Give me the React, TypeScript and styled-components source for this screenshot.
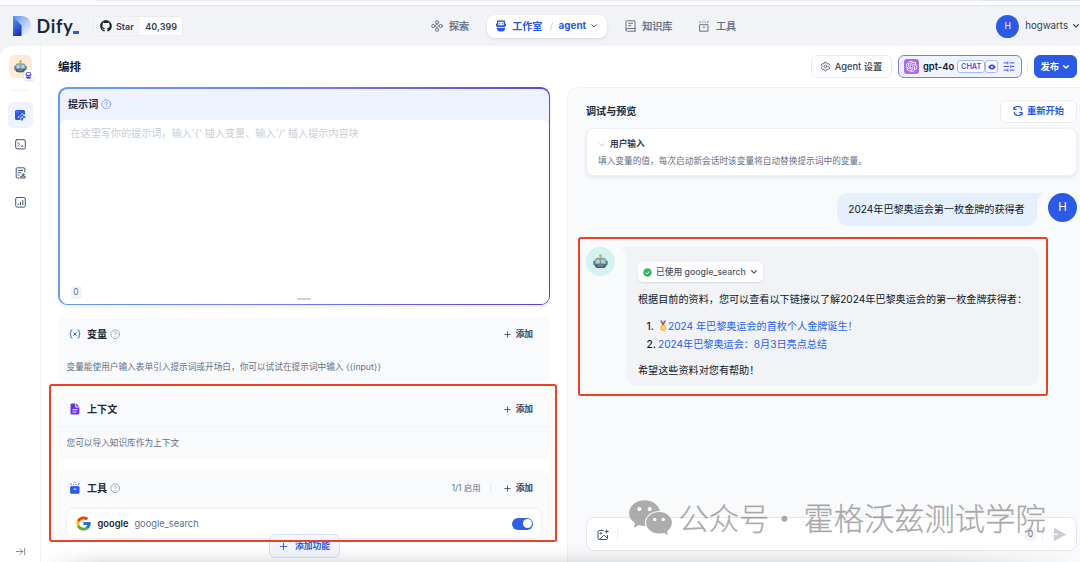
import React from "react";
import styled, { createGlobalStyle } from "styled-components";
import { Plus, Settings, CircleHelp, ArrowRightToLine } from "lucide-react";
import { FaGithub } from "react-icons/fa";
import { FcGoogle } from "react-icons/fc";
import { SiOpenai } from "react-icons/si";
import { AiFillWechat } from "react-icons/ai";
import { RiSendPlane2Fill } from "react-icons/ri";

const Global = createGlobalStyle`
  * { box-sizing: border-box; }
  html, body { margin: 0; padding: 0; overflow: hidden; }
  body { font-family: Inter, "Noto Sans CJK SC", sans-serif; color: #1d2939; font-size: 10px; line-height: 1; }
  svg { display: block; flex: none; }
`;

const Page = styled.div`
  position: relative;
  width: 1080px;
  height: 562px;
  overflow: hidden;
  display: flex;
  flex-direction: column;
  background: #f2f3f7;
`;
const BrowserEdge = styled.div`
  height: 6px;
  flex: none;
  display: flex;
  align-items: flex-start;
  background: #fff;
  border-bottom: 1px solid #dfe1e6;
  padding-left: 96px;
`;
const EdgeTab = styled.div<{ $w: number; $c: string }>`
  width: ${(p) => p.$w}px;
  height: 1px;
  background: ${(p) => p.$c};
`;
const Header = styled.header`
  height: 40px;
  flex: none;
  display: grid;
  grid-template-columns: 431px 1fr auto;
  align-items: center;
`;
const Brand = styled.div`
  display: flex;
  align-items: center;
  padding-left: 12px;
`;
const Logo = styled.div`
  width: 68px;
  height: 24px;
  display: flex;
  align-items: center;
`;
const Wordmark = styled.span`
  margin-left: 4.5px;
  font-family: Lato, sans-serif;
  font-weight: 700;
  font-size: 18px;
  line-height: 24px;
  letter-spacing: 0.7px;
  color: #1d2939;
`;
const Cursor = styled.i`
  width: 6px;
  height: 3px;
  margin: 12px 0 0 -0.2px;
  flex: none;
  background: #2b5be6;
`;
const StarBadge = styled.div`
  margin-left: 13px;
  display: flex;
  height: 20px;
  border: 1px solid #ebecf0;
  border-radius: 4px;
  overflow: hidden;
  font-size: 9px;
  font-weight: 600;
  color: #344054;
`;
const StarPart = styled.div<{ $white?: boolean }>`
  display: flex;
  align-items: center;
  gap: 4px;
  padding: 0 ${(p) => (p.$white ? 5.5 : 6)}px;
  background: ${(p) => (p.$white ? "#fff" : "#f4f5f8")};
`;
const Nav = styled.nav`
  display: flex;
  align-items: center;
  height: 40px;
`;
const NavItem = styled.div<{ $ml?: number }>`
  display: flex;
  align-items: center;
  gap: 6px;
  margin-left: ${(p) => p.$ml ?? 0}px;
  color: #667085;
  font-size: 10.1px;
  font-weight: 500;
  -webkit-text-stroke: 0.2px currentColor;
`;
const NavPill = styled.div`
  display: flex;
  align-items: center;
  margin-left: 18px;
  width: 120px;
  height: 23px;
  padding: 0 9px 0 8px;
  border-radius: 8px;
  background: #fff;
  box-shadow: 0 1px 3px rgba(16, 24, 40, 0.12);
  color: #2959e6;
  font-size: 10.1px;
  font-weight: 700;
`;
const PillText = styled.span`
  margin: 0 auto 0 5px;
`;
const PillApp = styled.span`
  margin-right: 4px;
  font-size: 9.9px;
`;
const Slash = styled.span`
  margin: 0 5.5px 0 0;
  color: #c9ced8;
  font-weight: 400;
`;
const Account = styled.div`
  display: flex;
  align-items: center;
  gap: 6px;
  color: #344054;
  font-size: 9.7px;
  svg { margin-left: -2px; }
`;
const Avatar = styled.div<{ $s: number; $f: number }>`
  flex: none;
  width: ${(p) => p.$s}px;
  height: ${(p) => p.$s}px;
  border-radius: 50%;
  display: flex;
  align-items: center;
  justify-content: center;
  background: #2b5be6;
  color: #fff;
  font-size: ${(p) => p.$f}px;
`;
const Body = styled.div`
  flex: 1;
  display: flex;
  background: #fff;
  border-top-left-radius: 12px;
  overflow: hidden;
`;
const Sidebar = styled.aside`
  width: 41px;
  flex: none;
  border-right: 1px solid #f0f1f4;
  display: flex;
  flex-direction: column;
  align-items: center;
  padding: 9px 0 5px;
`;
const AppIcon = styled.div`
  position: relative;
  width: 23px;
  height: 23px;
  border-radius: 6px;
  background: #fdead7;
  display: flex;
  align-items: center;
  justify-content: center;
`;
const AppKind = styled.div`
  position: absolute;
  right: -2px;
  bottom: -2px;
  width: 10px;
  height: 10px;
  border-radius: 3px;
  background: #fff;
  box-shadow: 0 1px 2px rgba(16, 24, 40, 0.15);
  display: flex;
  align-items: center;
  justify-content: center;
`;
const SideRule = styled.div`
  width: 18px;
  height: 1px;
  margin: 12px 0 11px;
  background: #f0f1f3;
`;
const SideItem = styled.div<{ $on?: boolean }>`
  width: 25px;
  height: 26px;
  margin-bottom: 3px;
  border-radius: 5px;
  display: flex;
  align-items: center;
  justify-content: center;
  color: #475467;
  background: ${(p) => (p.$on ? "#eff3ff" : "transparent")};
`;
const SideFoot = styled.div`
  margin-top: auto;
  color: #7b8497;
`;
const Main = styled.main`
  flex: 1;
  display: flex;
  flex-direction: column;
  min-width: 0;
`;
const TitleRow = styled.div`
  height: 41px;
  flex: none;
  display: flex;
  align-items: center;
  padding: 0 3px 0 17px;
`;
const Title = styled.h1`
  margin: 0 auto 0 0;
  padding-top: 2px;
  font-size: 11.5px;
  font-weight: 700;
  color: #101828;
`;
const Button = styled.div<{ $w: number; $primary?: boolean; $blue?: boolean }>`
  width: ${(p) => p.$w}px;
  height: 23px;
  display: flex;
  align-items: center;
  justify-content: center;
  gap: ${(p) => (p.$primary ? 3 : 4)}px;
  border-radius: 6px;
  border: 1px solid ${(p) => (p.$primary ? "#2b5be6" : "#eaecf0")};
  background: ${(p) => (p.$primary ? "#2b5be6" : "#fff")};
  color: ${(p) => (p.$primary ? "#fff" : p.$blue ? "#2959e6" : "#344054")};
  font-size: 9.3px;
  font-weight: ${(p) => (p.$primary || p.$blue ? 700 : 500)};
`;
const Model = styled.div`
  margin-left: 6px;
  width: 124px;
  height: 23px;
  border: 1px solid #7a7be8;
  border-radius: 6px;
  background: #eff3ff;
  display: flex;
  align-items: center;
  padding: 0 6px 0 5.5px;
  font-size: 9.4px;
  font-weight: 600;
  color: #101828;
`;
const ModelName = styled.span`
  margin-right: 3px;
`;
const ModelLogo = styled.div`
  width: 15px;
  height: 15px;
  border-radius: 3px;
  margin-right: 4px;
  background: #a96bf5;
  color: #fff;
  display: flex;
  align-items: center;
  justify-content: center;
`;
const Tag = styled.span<{ $w: number }>`
  width: ${(p) => p.$w}px;
  height: 13px;
  border: 1px solid #a4bcfd;
  border-radius: 3px;
  background: #fff;
  color: #444ce7;
  font-size: 7.3px;
  font-weight: 600;
  display: flex;
  align-items: center;
  justify-content: center;
  & ~ svg { margin-left: auto; }
`;
const VRule = styled.i<{ $h: number; $m: string }>`
  width: 1px;
  height: ${(p) => p.$h}px;
  margin: ${(p) => p.$m};
  background: #eaecf0;
`;
const Columns = styled.div`
  flex: 1;
  display: flex;
  min-height: 0;
`;
const Editor = styled.section`
  width: 526px;
  flex: none;
  padding: 0 17px;
`;
const PromptBorder = styled.div`
  height: 218px;
  padding: 1.5px;
  border-radius: 9px;
  background: linear-gradient(100deg, #659fee 0%, #7779e8 50%, #5b3fd8 100%);
  box-shadow: 0 2px 4px rgba(16, 24, 40, 0.07);
`;
const Prompt = styled.div`
  height: 100%;
  border-radius: 8px;
  background: #eff3ff;
  display: flex;
  flex-direction: column;
`;
const PromptHead = styled.div`
  height: 31.5px;
  flex: none;
  display: flex;
  align-items: center;
  gap: 3px;
  padding-left: 8.5px;
  font-size: 10.1px;
  font-weight: 700;
  color: #1d2939;
`;
const PromptText = styled.div`
  flex: 1;
  display: flex;
  flex-direction: column;
  justify-content: space-between;
  padding: 6px 11px 5px;
  border-radius: 8px;
  background: #fff;
  color: #c8cdd7;
  font-size: 10.1px;
  line-height: 14px;
`;
const PromptFoot = styled.div`
  display: grid;
  grid-template-columns: 1fr 14px 1fr;
  align-items: end;
`;
const Grip = styled.i`
  height: 2px;
  margin-bottom: -1px;
  border-radius: 1px;
  background: #d0d5dd;
`;
const Count = styled.span`
  width: 11px;
  height: 13px;
  display: flex;
  align-items: center;
  justify-content: center;
  border-radius: 3px;
  background: #f2f4f7;
  color: #667085;
  font-size: 8.6px;
`;
const Card = styled.div<{ $h: number; $mt: number }>`
  height: ${(p) => p.$h}px;
  margin-top: ${(p) => p.$mt}px;
  border-radius: 8px;
  background: #f9fafb;
`;
const CardHead = styled.div<{ $line?: boolean }>`
  height: 35px;
  display: flex;
  align-items: center;
  padding: 0 17px 0 11px;
  border-bottom: 1px solid ${(p) => (p.$line ? "#f3f4f7" : "transparent")};
`;
const CardTitle = styled.span`
  margin: 0 3px 0 6px;
  font-size: 10.1px;
  font-weight: 700;
`;
const Add = styled.span`
  display: flex;
  align-items: center;
  gap: 4px;
  margin-left: auto;
  font-size: 8.7px;
  font-weight: 500;
  color: #344054;
  -webkit-text-stroke: 0.2px currentColor;
`;
const Enabled = styled.span`
  margin-left: auto;
  font-size: 8.4px;
  color: #667085;
  & ~ ${Add} { margin-left: 0; }
`;
const Hint = styled.div<{ $h: number }>`
  height: ${(p) => p.$h}px;
  display: flex;
  align-items: center;
  padding: 2px 0 0 8.5px;
  font-size: 8.66px;
  color: #667085;
  white-space: pre;
`;
const Tool = styled.div`
  height: 29px;
  margin: 3px 9px 0;
  padding: 0 8px 0 7.5px;
  border-radius: 6px;
  background: #fff;
  box-shadow: 0 0 2px rgba(16, 24, 40, 0.12);
  display: flex;
  align-items: center;
  font-size: 9.3px;
  b { margin: 0 6px; font-weight: 600; }
  span { color: #667085; }
`;
const Switch = styled.div`
  margin-left: auto;
  width: 21px;
  height: 12px;
  padding: 1.5px;
  border-radius: 6px;
  background: #2f5fe3;
  display: flex;
  justify-content: flex-end;
  &::after { content: ""; width: 9px; height: 9px; border-radius: 50%; background: #fff; }
`;
const AddFeature = styled.div`
  position: relative;
  width: 71px;
  height: 24px;
  margin: -8px auto 0;
  padding-top: 1px;
  border: 1px solid #d5dffa;
  border-radius: 6px;
  background: #f5f7fe;
  display: flex;
  align-items: center;
  justify-content: center;
  gap: 6px;
  font-size: 8.8px;
  font-weight: 700;
  color: #2959e6;
`;
const Preview = styled.section`
  flex: 1;
  border: 1px solid #eff1f4;
  border-width: 1px 0 0 1px;
  border-top-left-radius: 12px;
  background: #f9fafc;
  padding: 11px 3px 11px 18px;
  display: flex;
  flex-direction: column;
`;
const PreviewHead = styled.div`
  height: 24px;
  display: flex;
  align-items: center;
  justify-content: space-between;
  font-size: 10.1px;
  font-weight: 700;
  color: #1d2939;
`;
const Inputs = styled.div`
  height: 48px;
  margin: 5px 0 17px;
  padding: 9px 11px 0;
  border: 1px solid #eef0f3;
  border-radius: 8px;
  background: #fff;
  box-shadow: 0 2px 4px rgba(16, 24, 40, 0.09);
  font-size: 8.68px;
  color: #667085;
  display: flex;
  flex-direction: column;
  gap: 4px;
  line-height: 13px;
`;
const InputsTitle = styled.div`
  display: flex;
  align-items: center;
  gap: 4px;
  font-weight: 700;
  color: #344054;
`;
const UserRow = styled.div`
  display: flex;
  justify-content: flex-end;
  align-items: flex-start;
  svg { margin: 0 6px 0 -5px; }
`;
const UserBubble = styled.div`
  width: 200px;
  height: 33px;
  border-radius: 11px 0 11px 11px;
  background: #e6f0fc;
  display: flex;
  align-items: center;
  justify-content: center;
  padding-right: 1px;
  font-size: 10.1px;
  color: #101828;
`;
const BotRow = styled.div`
  display: flex;
  margin-top: 21px;
  & > svg { margin: 0 -1px 0 6px; }
`;
const BotAvatar = styled.div`
  width: 29px;
  height: 29px;
  border-radius: 50%;
  background: #d5f2f3;
  display: flex;
  align-items: center;
  justify-content: center;
`;
const BotBubble = styled.div`
  width: 413px;
  height: 139px;
  padding: 15px 12px;
  border-radius: 0 11px 11px 11px;
  background: #f2f3f7;
  font-size: 10.12px;
  color: #101828;
  line-height: 18px;
  white-space: nowrap;
  p { margin: 8px 0 8.5px; }
`;
const Used = styled.div`
  width: 125px;
  height: 20px;
  display: flex;
  align-items: center;
  gap: 4px;
  padding: 0 5px;
  border-radius: 5px;
  background: #fff;
  box-shadow: 0 1px 2px rgba(16, 24, 40, 0.12);
  font-size: 8.75px;
  font-weight: 500;
  color: #475467;
`;
const Links = styled.ol`
  list-style: none;
  margin: 0;
  padding: 0 0 0 8.5px;
  li { display: flex; align-items: center; height: 18px; color: #101828; }
  a { color: #2563eb; display: flex; align-items: center; }
  span { margin-right: 2.5px; width: 9px; font-weight: 500; }
`;
const Composer = styled.div`
  height: 34px;
  margin-top: auto;
  display: flex;
  align-items: center;
  padding: 1px 9px 0 10px;
  border: 1px solid #e4e7ec;
  border-radius: 8px;
  background: #fff;
  color: #475467;
`;
const Marker = styled.div<{ $x: number; $y: number; $w: number; $h: number }>`
  position: absolute;
  left: ${(p) => p.$x}px;
  top: ${(p) => p.$y}px;
  width: ${(p) => p.$w}px;
  height: ${(p) => p.$h}px;
  border: 2px solid #ee4027;
  border-radius: 3px;
`;
const Shade = styled.div`
  position: absolute;
  left: 41px;
  right: 0;
  bottom: 0;
  height: 19px;
  background: linear-gradient(rgba(90, 90, 90, 0), rgba(90, 90, 90, 0.035) 50%, rgba(90, 90, 90, 0.14));
  mask-image: linear-gradient(90deg, transparent, #000 60px, #000 86%, transparent);
`;
const Watermark = styled.div`
  position: absolute;
  left: 625.5px;
  top: 491px;
  height: 52px;
  display: flex;
  align-items: center;
  color: rgba(145, 145, 145, 0.75);
  font-family: "Noto Sans CJK SC", sans-serif;
  font-weight: 300;
  font-size: 30.3px;
  white-space: pre;
  -webkit-text-stroke: 0.35px rgba(145, 145, 145, 0.6);
  svg { margin-right: 4px; }
`;
const Dot = styled.span`
  width: 34px;
  display: flex;
  justify-content: center;
  padding-right: 4px;
`;
const ToolBlue = styled.span`
  color: #2b5be6;
`;

const DifyMark = () => (
  <svg width="20" height="24" viewBox="0 0 20 24">
    <defs>
      <linearGradient id="stem" x1=".2" y1="0" x2="0.6" y2="1">
        <stop offset="0" stopColor="#5f8ee8" />
        <stop offset=".5" stopColor="#3a66dc" />
        <stop offset="1" stopColor="#1430b8" />
      </linearGradient>
      <linearGradient id="bowl" x1="0" y1="0" x2=".75" y2="1">
        <stop offset="0" stopColor="#5f8ee8" />
        <stop offset=".45" stopColor="#a6c1f5" />
        <stop offset="1" stopColor="#f0f4fd" />
      </linearGradient>
    </defs>
    <path d="M1 2h8c6 0 10 4 10 10s-4 10-10 10H1z" fill="url(#bowl)" />
    <path d="M1 2l8.500 9.500V22H1z" fill="url(#stem)" />
  </svg>
);

const Robot = ({ size }: { size: number }) => (
  <svg width={size} height={size} viewBox="0 0 16 16">
    <path d="M8 1v3" stroke="#d98b32" strokeWidth="1.6" />
    <circle cx="8" cy="1.7" r="1.4" fill="#f0a531" />
    <rect x=".4" y="7" width="2.6" height="5" rx="1" fill="#4f747d" />
    <rect x="13" y="7" width="2.6" height="5" rx="1" fill="#4f747d" />
    <path d="M2 6Q2.300 4 5 4h6q2.700 0 3 2v6.500Q13.500 15 11 15H5q-2.500 0-3-2.500z" fill="#83a8af" />
    <path d="M2 11h12v1.500Q13.500 15 11 15H5q-2.500 0-3-2.500z" fill="#44656f" />
    <circle cx="5.200" cy="8" r="1.900" fill="#b4eef4" />
    <circle cx="10.800" cy="8" r="1.900" fill="#b4eef4" />
    <circle cx="5.200" cy="8" r=".7" fill="#6ea6b0" />
    <circle cx="10.800" cy="8" r=".7" fill="#6ea6b0" />
    <path d="M8 8.600l1.200 2.200H6.800z" fill="#e0584a" />
    <path d="M5.200 12.500h5.600" stroke="#8fa9ae" strokeWidth="1" />
  </svg>
);

const BotGlyph = ({ size, color }: { size: number; color: string }) => (
  <svg width={size} height={size} viewBox="0 0 12 12" fill={color}>
    <path d="M2.600.5h6.800q.6 0 .6.600V7H2V1.100q0-.6.600-.6z" />
    <path d="M1 3.600h1v2.600H1zM10 3.600h1v2.600h-1z" />
    <path d="M1.800 7.800h8.400v1Q9.600 11.600 7.500 11.600h-3Q2.400 11.600 1.800 8.800z" />
    <path d="M3.300 1.900h5.400v3.300H3.300z" fill="#fff" />
    <path d="M4.200 2.900h1v1.300h-1zM6.800 2.900h1v1.300h-1z" />
  </svg>
);

const line = { fill: "none", stroke: "currentColor", strokeLinecap: "round", strokeLinejoin: "round" } as const;

const Chevron = ({ color, w = 1.2 }: { color?: string; w?: number }) => (
  <svg width="8" height="6" viewBox="0 0 8 6" {...line} stroke={color ?? "currentColor"} strokeWidth={w}>
    <path d="M1.600 1.700L4 4.100l2.400-2.400" />
  </svg>
);
const ExploreGlyph = () => (
  <svg width="12" height="12" viewBox="0 0 12 12" {...line}>
    <circle cx="6" cy="2.300" r="1.600" /><circle cx="6" cy="9.700" r="1.600" />
    <circle cx="2.300" cy="6" r="1.600" /><circle cx="9.700" cy="6" r="1.600" />
    <path d="M6 4.300L7.700 6 6 7.700 4.300 6z" strokeWidth=".8" />
  </svg>
);
const BookGlyph = () => (
  <svg width="11" height="12" viewBox="0 0 11 12" {...line}>
    <path d="M10 8.500V.8H2.300Q1 .8 1 2.200v7.600Q1 11.200 2.400 11.200H10M10 8.500H2.400Q1 8.500 1 9.800M3.700 3.300h3.800M3.700 5.600h2.200M10 8.500v2.700" />
  </svg>
);
const ToolGlyph = ({ solid }: { solid?: boolean }) => (
  <svg width="12" height="12" viewBox="0 0 12 12" {...line}>
    <path d="M2 4.700h8v6.500H2z" fill={solid ? "currentColor" : "none"} />
    <path d="M5 7.200h2" stroke={solid ? "#fff" : "currentColor"} />
    <path d="M2.300 2.500l-.4-.8M9.600 2.500l.5-1.100M4.600 2.400v-.1M7.300 2.400v-.1M6 .8V.7" />
  </svg>
);
const ComposeGlyph = () => (
  <svg width="12" height="12" viewBox="0 0 12 12">
    <path d="M2.500 1h7Q11 1 11 2.500v3.300L9.300 5.300 8.100 3.600 6.800 6.300 3.900 7.600v1L6.200 9.600 6.800 11H2.500Q1 11 1 9.500v-7Q1 1 2.500 1z" fill="#2b5be6" />
    <path d="M2.600 2.900h.7M4.400 2.900h.7" stroke="#fff" strokeWidth=".8" />
    <path d="M8.100 5.200l.8 2.100 2.300.8-2.300.8-.8 2.300-.8-2.300L5 8.100l2.300-.8z" fill="none" stroke="#2b5be6" strokeWidth="1.100" strokeLinejoin="round" />
  </svg>
);
const TerminalGlyph = () => (
  <svg width="11" height="11" viewBox="0 0 11 11" {...line}>
    <rect x=".7" y=".7" width="9.600" height="9.200" rx="1.300" />
    <path d="M2.900 3.600l1.700 1.700-1.700 1.700M6 7.100h2" />
  </svg>
);
const LogsGlyph = () => (
  <svg width="11" height="12" viewBox="0 0 11 12" {...line}>
    <path d="M4 11H2.200Q1.200 11 1.200 10V1.800Q1.200.8 2.200.8h6.600q1 0 1 1V5M3.200 3.400h4.400M3.200 5.700h2.500M3.200 8h1" />
    <path d="M5.900 11h4.300V9.600L8.800 9.200H7.300L5.900 9.600z" />
    <circle cx="8" cy="7.700" r="1" />
  </svg>
);
const ChartGlyph = () => (
  <svg width="11" height="11" viewBox="0 0 11 11" {...line}>
    <rect x=".7" y=".5" width="9.600" height="9.600" rx="1.500" />
    <path d="M3.200 7.800v-1M5.500 7.800V5.300M7.800 7.800V3.300" />
  </svg>
);
const VarGlyph = () => (
  <svg width="12" height="10" viewBox="0 0 12 10" {...line} stroke="#3a68ea">
    <path d="M3 .9Q1.800.9 1.800 2v1.800L1 5l.8 1.200V8q0 1.100 1.200 1.100M9 .9q1.200 0 1.200 1.100v1.800L11 5l-.8 1.200V8q0 1.100-1.200 1.100M4.700 3.700l2.600 2.600M7.300 3.700L4.700 6.300" />
  </svg>
);
const FileGlyph = () => (
  <svg width="12" height="12" viewBox="0 0 12 12">
    <path d="M2.700.5h3.600v3q0 .9.9.9h3.200v5.900q0 1.200-1.200 1.200H2.700Q1.500 11.500 1.500 10.300V1.700Q1.500.5 2.700.5zM7.300.7l3 2.800h-3z" fill="#6a35e0" />
    <path d="M3.500 6.700h5M3.500 9h4" stroke="#fff" strokeWidth=".9" />
  </svg>
);
const SlidersGlyph = () => (
  <svg width="12" height="11" viewBox="0 0 12 11" {...line} stroke="#444ce7">
    <path d="M1 1.900h2.600M7 1.900h4M1 5.500h4.500M9 5.500h2M1 9.100h2.600M7 9.100h4M4.800.9v2M7.800 4.500v2M4.800 8.100v2" />
  </svg>
);
const RestartGlyph = () => (
  <svg width="10" height="10" viewBox="0 0 10 10" {...line} strokeWidth="1.200">
    <path d="M.9 1v2.500h2.500M1 3.300A4 4 0 0 1 8.800 4M9.100 9V6.500H6.600M9 6.700A4 4 0 0 1 1.200 6" />
  </svg>
);
const EyeGlyph = () => (
  <svg width="8" height="6" viewBox="0 0 8 6">
    <path d="M0 3Q4-2.600 8 3 4 8.600 0 3z" fill="#444ce7" /><circle cx="4" cy="3" r=".9" fill="#fff" />
  </svg>
);
const CheckGlyph = () => (
  <svg width="9" height="9" viewBox="0 0 9 9">
    <circle cx="4.500" cy="4.500" r="4.200" fill="#41ae66" />
    <path d="M2.600 4.600L4 6l2.500-2.700" fill="none" stroke="#fff" />
  </svg>
);
const MedalGlyph = () => (
  <svg width="10" height="12" viewBox="0 0 10 12">
    <path d="M2 .5h2l1.600 4.500H4.300z" fill="#4a78c8" />
    <path d="M8 .5H6L4.200 5h1.600z" fill="#d6493c" />
    <circle cx="5.200" cy="7.900" r="2.900" fill="#f3bd2f" />
    <circle cx="5.200" cy="7.900" r="1.600" fill="#fadb63" />
  </svg>
);
const AddImageGlyph = () => (
  <svg width="12" height="12" viewBox="0 0 12 12" {...line}>
    <path d="M6.300 1.500H2.200Q1 1.500 1 2.700v6.600q0 1.200 1.200 1.200h7.100q1.200 0 1.200-1.200V6.500M9.700.9v3.200M8.100 2.500h3.200M2.500 10.300l4.600-4.100 3.200 2.900" />
    <circle cx="3.900" cy="4.300" r=".8" />
  </svg>
);

const AddButton = () => (
  <Add><Plus size={9} strokeWidth={2.2} />添加</Add>
);

export default function App() {
  return (
    <Page>
      <Global />
      <BrowserEdge>
        <EdgeTab $w={886} $c="#eff0f4" />
        <EdgeTab $w={98} $c="#d9e3fa" />
      </BrowserEdge>
      <Header>
        <Brand>
          <Logo><DifyMark /><Wordmark>Dify</Wordmark><Cursor /></Logo>
          <StarBadge>
            <StarPart><FaGithub size={12} color="#1b1f24" />Star</StarPart>
            <StarPart $white>40,399</StarPart>
          </StarBadge>
        </Brand>
        <Nav>
          <NavItem><ExploreGlyph />探索</NavItem>
          <NavPill>
            <BotGlyph size={12} color="#2b5be6" />
            <PillText>工作室</PillText>
            <Slash>/</Slash>
            <PillApp>agent</PillApp>
            <Chevron w={1} />
          </NavPill>
          <NavItem $ml={18}><BookGlyph />知识库</NavItem>
          <NavItem $ml={25.5}><ToolGlyph />工具</NavItem>
        </Nav>
        <Account>
          <Avatar $s={23} $f={8.7}>H</Avatar>
          hogwarts
          <Chevron />
        </Account>
      </Header>
      <Body>
        <Sidebar>
          <AppIcon>
            <Robot size={13} />
            <AppKind><BotGlyph size={7} color="#444ce7" /></AppKind>
          </AppIcon>
          <SideRule />
          <SideItem $on><ComposeGlyph /></SideItem>
          <SideItem><TerminalGlyph /></SideItem>
          <SideItem><LogsGlyph /></SideItem>
          <SideItem><ChartGlyph /></SideItem>
          <SideFoot><ArrowRightToLine size={11} /></SideFoot>
        </Sidebar>
        <Main>
          <TitleRow>
            <Title>编排</Title>
            <Button $w={81}><Settings size={11} color="#5a6478" />Agent 设置</Button>
            <Model>
              <ModelLogo><SiOpenai size={11} /></ModelLogo>
              <ModelName>gpt-4o</ModelName>
              <Tag $w={28}>CHAT</Tag>
              <Tag $w={13}><EyeGlyph /></Tag>
              <SlidersGlyph />
            </Model>
            <VRule $h={11} $m="0 6px 0 5px" />
            <Button $w={43.5} $primary>发布<Chevron w={1.4} /></Button>
          </TitleRow>
          <Columns>
            <Editor>
              <PromptBorder>
                <Prompt>
                  <PromptHead>提示词<CircleHelp size={10.5} color="#8098f9" /></PromptHead>
                  <PromptText>
                    {"在这里写你的提示词，输入'{' 插入变量、输入'/' 插入提示内容块"}
                    <PromptFoot><Count>0</Count><Grip /></PromptFoot>
                  </PromptText>
                </Prompt>
              </PromptBorder>
              <Card $h={66} $mt={12}>
                <CardHead>
                  <VarGlyph /><CardTitle>变量</CardTitle><CircleHelp size={10.5} color="#98a2b3" />
                  <AddButton />
                </CardHead>
                <Hint $h={28}>{"变量能使用户输入表单引入提示词或开场白，你可以试试在提示词中输入 {{input}}"}</Hint>
              </Card>
              <Card $h={67} $mt={9}>
                <CardHead $line><FileGlyph /><CardTitle>上下文</CardTitle><AddButton /></CardHead>
                <Hint $h={30}>您可以导入知识库作为上下文</Hint>
              </Card>
              <Card $h={71} $mt={12}>
                <CardHead>
                  <ToolBlue><ToolGlyph solid /></ToolBlue><CardTitle>工具</CardTitle><CircleHelp size={10.5} color="#98a2b3" />
                  <Enabled>1/1 启用</Enabled>
                  <VRule $h={10} $m="0 12px 0 9px" />
                  <AddButton />
                </CardHead>
                <Tool><FcGoogle size={17} /><b>google</b><span>google_search</span><Switch /></Tool>
              </Card>
              <AddFeature><Plus size={11} />添加功能</AddFeature>
            </Editor>
            <Preview>
              <PreviewHead>
                调试与预览
                <Button $w={77} $blue><RestartGlyph />重新开始</Button>
              </PreviewHead>
              <Inputs>
                <InputsTitle><Chevron color="#c3c8d2" w={1} />用户输入</InputsTitle>
                填入变量的值，每次启动新会话时该变量将自动替换提示词中的变量。
              </Inputs>
              <UserRow>
                <UserBubble>2024年巴黎奥运会第一枚金牌的获得者</UserBubble>
                <svg width="10" height="12" viewBox="0 0 10 12"><path d="M0 0h10L5 8v4H0z" fill="#e6f0fc" /></svg>
                <Avatar $s={29} $f={11.5}>H</Avatar>
              </UserRow>
              <BotRow>
                <BotAvatar><Robot size={15} /></BotAvatar>
                <svg width="6" height="12" viewBox="0 0 6 12"><path d="M0 0h6v12H5V8z" fill="#f2f3f7" /></svg>
                <BotBubble>
                  <Used><CheckGlyph />已使用 google_search<Chevron /></Used>
                  <p>根据目前的资料，您可以查看以下链接以了解2024年巴黎奥运会的第一枚金牌获得者：</p>
                  <Links>
                    <li><span>1.</span><a><MedalGlyph />2024 年巴黎奥运会的首枚个人金牌诞生！</a></li>
                    <li><span>2.</span><a>2024年巴黎奥运会：8月3日亮点总结</a></li>
                  </Links>
                  <p>希望这些资料对您有帮助！</p>
                </BotBubble>
              </BotRow>
              <Composer>
                <AddImageGlyph />
                <VRule $h={11} $m="0 auto 0 8px" />
                <Count>0</Count>
                <VRule $h={14} $m="0 9px 0 6px" />
                <RiSendPlane2Fill size={15} color="#c9ced8" />
              </Composer>
            </Preview>
          </Columns>
        </Main>
      </Body>
      <Shade />
      <Marker $x={49} $y={384} $w={508} $h={158} />
      <Marker $x={578} $y={236.5} $w={470} $h={159} />
      <Watermark><AiFillWechat size={49} /><span>公众号</span><Dot>·</Dot><span>霍格沃兹测试学院</span></Watermark>
    </Page>
  );
}
